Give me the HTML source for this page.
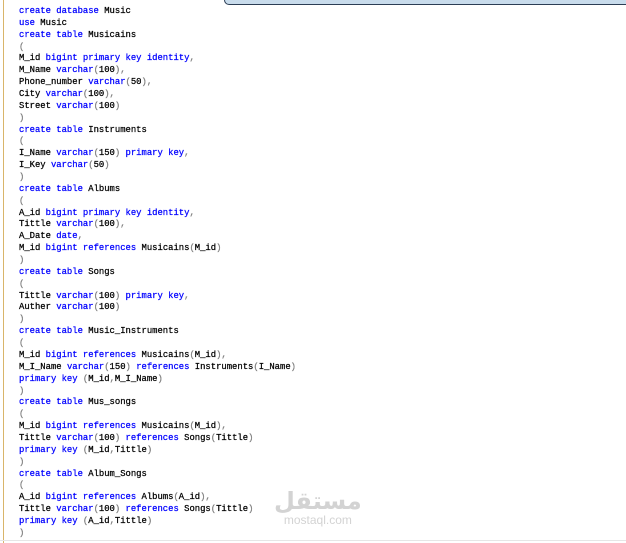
<!DOCTYPE html>
<html><head><meta charset="utf-8"><style>
html,body{margin:0;padding:0;width:626px;height:543px;overflow:hidden;background:#fff;position:relative}
#bar{position:absolute;left:3px;top:0;width:1px;height:543px;background:#d9b56a}
#top{position:absolute;left:224px;top:-10px;width:410px;height:13px;background:#c9dcec;border:1px solid #2c3e55;border-radius:0 0 0 5px}
#bot{position:absolute;left:0;top:540px;width:626px;height:1px;background:#e6e6e6}
pre{position:absolute;left:19px;top:6px;margin:0;font-family:"Liberation Mono",monospace;font-size:8.9px;line-height:11.86px;color:#000;-webkit-text-stroke:0.25px currentColor}
.k{color:#0000ff}.g{color:#808080}
#logo{position:absolute;left:274px;top:489px;color:#d3d3d3;font-family:"Liberation Sans","DejaVu Sans",sans-serif;text-align:center}
#logo .a{font-size:24px;font-weight:bold;line-height:24px;font-family:"DejaVu Sans",sans-serif}
#logo .b{font-size:12px;line-height:14px}
</style></head><body>
<div id="bar"></div><div id="top"></div><div id="bot"></div>
<pre><span class="k">create database</span> Music
<span class="k">use</span> Music
<span class="k">create table</span> Musicains
<span class="g">(</span>
M_id <span class="k">bigint primary key identity</span><span class="g">,</span>
M_Name <span class="k">varchar</span><span class="g">(</span>100<span class="g">),</span>
Phone_number <span class="k">varchar</span><span class="g">(</span>50<span class="g">),</span>
City <span class="k">varchar</span><span class="g">(</span>100<span class="g">),</span>
Street <span class="k">varchar</span><span class="g">(</span>100<span class="g">)</span>
<span class="g">)</span>
<span class="k">create table</span> Instruments
<span class="g">(</span>
I_Name <span class="k">varchar</span><span class="g">(</span>150<span class="g">)</span> <span class="k">primary key</span><span class="g">,</span>
I_Key <span class="k">varchar</span><span class="g">(</span>50<span class="g">)</span>
<span class="g">)</span>
<span class="k">create table</span> Albums
<span class="g">(</span>
A_id <span class="k">bigint primary key identity</span><span class="g">,</span>
Tittle <span class="k">varchar</span><span class="g">(</span>100<span class="g">),</span>
A_Date <span class="k">date</span><span class="g">,</span>
M_id <span class="k">bigint references</span> Musicains<span class="g">(</span>M_id<span class="g">)</span>
<span class="g">)</span>
<span class="k">create table</span> Songs
<span class="g">(</span>
Tittle <span class="k">varchar</span><span class="g">(</span>100<span class="g">)</span> <span class="k">primary key</span><span class="g">,</span>
Auther <span class="k">varchar</span><span class="g">(</span>100<span class="g">)</span>
<span class="g">)</span>
<span class="k">create table</span> Music_Instruments
<span class="g">(</span>
M_id <span class="k">bigint references</span> Musicains<span class="g">(</span>M_id<span class="g">),</span>
M_I_Name <span class="k">varchar</span><span class="g">(</span>150<span class="g">)</span> <span class="k">references</span> Instruments<span class="g">(</span>I_Name<span class="g">)</span>
<span class="k">primary key</span> <span class="g">(</span>M_id<span class="g">,</span>M_I_Name<span class="g">)</span>
<span class="g">)</span>
<span class="k">create table</span> Mus_songs
<span class="g">(</span>
M_id <span class="k">bigint references</span> Musicains<span class="g">(</span>M_id<span class="g">),</span>
Tittle <span class="k">varchar</span><span class="g">(</span>100<span class="g">)</span> <span class="k">references</span> Songs<span class="g">(</span>Tittle<span class="g">)</span>
<span class="k">primary key</span> <span class="g">(</span>M_id<span class="g">,</span>Tittle<span class="g">)</span>
<span class="g">)</span>
<span class="k">create table</span> Album_Songs
<span class="g">(</span>
A_id <span class="k">bigint references</span> Albums<span class="g">(</span>A_id<span class="g">),</span>
Tittle <span class="k">varchar</span><span class="g">(</span>100<span class="g">)</span> <span class="k">references</span> Songs<span class="g">(</span>Tittle<span class="g">)</span>
<span class="k">primary key</span> <span class="g">(</span>A_id<span class="g">,</span>Tittle<span class="g">)</span>
<span class="g">)</span></pre>
<div id="logo"><div class="a">مستقل</div><div class="b">mostaql.com</div></div>
</body></html>
